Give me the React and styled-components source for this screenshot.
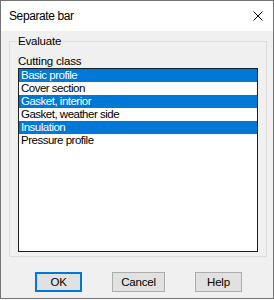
import React from 'react';
import styled, { createGlobalStyle } from 'styled-components';

const GlobalStyle = createGlobalStyle`
  body {
    margin: 0;
    background: #ffffff;
    font-family: "Liberation Sans", Arial, sans-serif;
  }
`;

const Window = styled.div`
  width: 274px;
  height: 299px;
  box-sizing: border-box;
  border: 1px solid #747474;
  background: #f0f0f0;
  display: flex;
  flex-direction: column;
  font-size: 11px;
  color: #000;
`;

const TitleBar = styled.div`
  height: 30px;
  background: #ffffff;
  display: flex;
  align-items: center;
  justify-content: space-between;
  padding: 0 10px 0 8px;
  font-size: 12px;
  letter-spacing: -0.4px;
  flex-shrink: 0;
`;

const Body = styled.div`
  padding: 3px 6px 0 8px;
  display: flex;
  flex-direction: column;
`;

const Group = styled.fieldset`
  margin: 0;
  padding: 0;
  border: 1px solid #dcdcdc;
  min-width: 0;

  legend {
    margin-left: 6px;
    padding: 0 2px;
    line-height: 14px;
    font-size: 11.5px;
    letter-spacing: -0.2px;
  }
`;

const GroupInner = styled.div`
  padding: 7px 8px 4px 8px;
  display: flex;
  flex-direction: column;
`;

const Label = styled.div`
  line-height: 13px;
  font-size: 11.5px;
  letter-spacing: -0.2px;
`;

const ListBox = styled.ul`
  list-style: none;
  margin: 0;
  padding: 0;
  height: 184px;
  box-sizing: border-box;
  border: 1px solid #1f1f1f;
  background: #ffffff;
`;

const Item = styled.li`
  height: 13px;
  line-height: 13px;
  padding-left: 2px;
  font-size: 11.5px;
  letter-spacing: -0.5px;
  white-space: nowrap;
  background: ${p => (p.$selected ? '#0078d7' : 'transparent')};
  color: ${p => (p.$selected ? '#ffffff' : '#000000')};
`;

const ButtonRow = styled.div`
  display: flex;
  gap: 30px;
  padding: 15px 0 0 34px;
`;

const Button = styled.button`
  height: 20px;
  width: ${p => p.$w}px;
  box-sizing: border-box;
  padding: 0;
  font-family: inherit;
  font-size: 11.5px;
  letter-spacing: -0.2px;
  color: #000;
  background: #e1e1e1;
  border: ${p => (p.$default ? '2px solid #0078d7' : '1px solid #adadad')};
`;

const CloseIcon = () => (
  <svg width="10" height="10" viewBox="0 0 10 10">
    <path d="M0.5 0.5 L9.5 9.5 M9.5 0.5 L0.5 9.5" stroke="#000" strokeWidth="1" fill="none" />
  </svg>
);

const items = [
  { label: 'Basic profile', selected: true },
  { label: 'Cover section', selected: false },
  { label: 'Gasket, interior', selected: true },
  { label: 'Gasket, weather side', selected: false },
  { label: 'Insulation', selected: true },
  { label: 'Pressure profile', selected: false },
];

export default function App() {
  return (
    <>
      <GlobalStyle />
      <Window>
        <TitleBar>
          <span>Separate bar</span>
          <CloseIcon />
        </TitleBar>
        <Body>
          <Group>
            <legend>Evaluate</legend>
            <GroupInner>
              <Label>Cutting class</Label>
              <ListBox>
                {items.map(it => (
                  <Item key={it.label} $selected={it.selected}>{it.label}</Item>
                ))}
              </ListBox>
            </GroupInner>
          </Group>
        </Body>
        <ButtonRow>
          <Button $w={47} $default>OK</Button>
          <Button $w={53}>Cancel</Button>
          <Button $w={47}>Help</Button>
        </ButtonRow>
      </Window>
    </>
  );
}
